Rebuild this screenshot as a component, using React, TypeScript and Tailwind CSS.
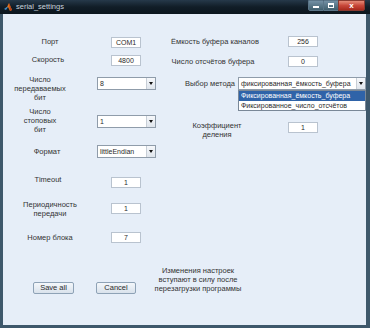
import React from 'react';

const font = { fontFamily: '"Liberation Sans", Arial, sans-serif' };

function Edit({ value, className = '' }: { value: string; className?: string }) {
  return (
    <div
      className={`w-[30px] h-[11px] shrink-0 bg-white border border-[#b9c3cf] flex items-center justify-center text-[7px] leading-none text-[#2a2a2a] ${className}`}
    >
      {value}
    </div>
  );
}

function Popup({ value, className = '' }: { value: string; className?: string }) {
  return (
    <div
      className={`h-[13px] shrink-0 bg-white border border-[#8f9caa] flex items-center text-[7px] leading-[11px] text-[#2a2a2a] ${className}`}
    >
      <span className="flex-1 pl-[2px] truncate">{value}</span>
      <span className="w-[9px] h-full flex items-center justify-center bg-gradient-to-b from-[#f6f8fb] to-[#dfe5ec] border-l border-[#c7ced6]">
        <span className="w-0 h-0 border-l-[2.5px] border-r-[2.5px] border-t-[3px] border-l-transparent border-r-transparent border-t-[#111]" />
      </span>
    </div>
  );
}

function Button({ label, className = '' }: { label: string; className?: string }) {
  return (
    <div
      className={`h-[12px] shrink-0 rounded-[2px] border border-[#8ea2b6] bg-gradient-to-b from-[#f4f7fb] to-[#d9e2ec] flex items-center justify-center text-[7.5px] leading-none text-[#2a2a2a] ${className}`}
    >
      {label}
    </div>
  );
}

export default function App() {
  return (
    <div
      className="w-[370px] h-[328px] flex flex-col bg-[#3e586b] text-[#333] text-[7.5px] select-none"
      style={font}
    >
      {/* title bar */}
      <div className="h-[14px] shrink-0 relative flex items-center bg-gradient-to-b from-[#26394a] via-[#111d27] to-[#0c161e]">
        <svg width="10" height="10" viewBox="0 0 10 10" className="ml-[3px]">
          <path d="M1 7 L4 5 L6 1 L9 8 L7 9 L5 5 Z" fill="#e2741f" />
          <path d="M1 7 L4 5 L5 5 L3 8 Z" fill="#3b8fd0" />
          <path d="M6 1 L9 8 L7 9 Z" fill="#b2401a" />
        </svg>
        <span className="ml-[3px] text-[7.5px] text-[#c9d3dc]">serial_settings</span>
        <div className="absolute right-[5px] top-0 flex h-[11px]">
          <div className="w-[16px] h-full rounded-bl-[2px] border border-[#5b7588] bg-gradient-to-b from-[#7390a4] to-[#41606f] flex items-end justify-center pb-[2px]">
            <span className="w-[6px] h-[2px] bg-white" />
          </div>
          <div className="w-[14px] h-full border-y border-[#5b7588] bg-gradient-to-b from-[#7390a4] to-[#41606f] flex items-center justify-center">
            <span className="w-[6px] h-[5px] border border-white border-t-2" />
          </div>
          <div className="w-[27px] h-full rounded-br-[2px] border border-[#8a3a30] bg-gradient-to-b from-[#e48a78] via-[#c8473a] to-[#a8281c] flex items-center justify-center text-white text-[8px] font-bold leading-none">
            x
          </div>
        </div>
      </div>

      {/* client */}
      <div className="flex-1 ml-[3px] mr-[4px] mb-[3px] bg-[#e6eef8] flex flex-col">
        <div className="flex">
          {/* left column */}
          <div className="w-[168px] shrink-0 flex flex-col">
            <div className="flex items-center h-[12px] mt-[22px]">
              <div className="w-[94px] shrink-0">
                <div className="ml-[17px] w-[60px] text-center">Порт</div>
              </div>
              <Edit value="COM1" className="ml-[14px]" />
            </div>
            <div className="flex items-center h-[12px] mt-[6px]">
              <div className="w-[94px] shrink-0">
                <div className="ml-[15px] w-[60px] text-center">Скорость</div>
              </div>
              <Edit value="4800" className="ml-[14px]" />
            </div>
            <div className="flex items-start h-[28px] mt-[9px]">
              <div className="w-[94px] shrink-0">
                <div className="ml-[7px] w-[60px] text-center leading-[9px]">
                  Число
                  <br />
                  передаваемых
                  <br />
                  бит
                </div>
              </div>
              <Popup value="8" className="w-[59px] mt-[2px]" />
            </div>
            <div className="flex items-start h-[28px] mt-[4px]">
              <div className="w-[94px] shrink-0">
                <div className="ml-[7px] w-[60px] text-center leading-[9px]">
                  Число
                  <br />
                  стоповых
                  <br />
                  бит
                </div>
              </div>
              <Popup value="1" className="w-[59px] mt-[8px]" />
            </div>
            <div className="flex items-center h-[13px] mt-[10px]">
              <div className="w-[94px] shrink-0">
                <div className="ml-[14px] w-[60px] text-center">Формат</div>
              </div>
              <Popup value="littleEndian" className="w-[59px]" />
            </div>
            <div className="flex items-start h-[13px] mt-[17px]">
              <div className="w-[94px] shrink-0">
                <div className="ml-[15px] w-[60px] text-center leading-[10px]">Timeout</div>
              </div>
              <Edit value="1" className="ml-[14px] mt-[2px]" />
            </div>
            <div className="flex items-start h-[19px] mt-[12px]">
              <div className="w-[94px] shrink-0">
                <div className="ml-[12px] w-[70px] text-center leading-[9px]">
                  Периодичность
                  <br />
                  передачи
                </div>
              </div>
              <Edit value="1" className="ml-[14px] mt-[3px]" />
            </div>
            <div className="flex items-center h-[11px] mt-[13px]">
              <div className="w-[94px] shrink-0">
                <div className="ml-[12px] w-[70px] text-center">Номер блока</div>
              </div>
              <Edit value="7" className="ml-[14px]" />
            </div>
          </div>

          {/* right column */}
          <div className="flex-1 flex flex-col">
            <div className="flex items-center h-[11px] mt-[22px]">
              <div className="w-[117px] shrink-0">
                <div className="w-[88px] text-center whitespace-nowrap">Ёмкость буфера каналов</div>
              </div>
              <Edit value="256" />
            </div>
            <div className="flex items-center h-[11px] mt-[9px]">
              <div className="w-[117px] shrink-0">
                <div className="w-[84px] text-center whitespace-nowrap">Число отсчётов буфера</div>
              </div>
              <Edit value="0" />
            </div>
            <div className="flex items-center h-[13px] mt-[10px]">
              <div className="w-[67px] shrink-0 text-right pr-[3px] whitespace-nowrap">Выбор метода</div>
              <div className="relative">
                <Popup value="фиксированная_ёмкость_буфера" className="w-[128px]" />
                <div className="absolute left-0 top-full w-[128px] bg-white border border-[#7a8898] text-[7px] z-10">
                  <div className="bg-[#2f63a8] text-white pl-[2px] h-[10px] leading-[10px]">
                    Фиксированная_ёмкость_буфера
                  </div>
                  <div className="pl-[2px] h-[9px] leading-[9px] text-[#2a2a2a]">
                    Фиксированное_число_отсчётов
                  </div>
                </div>
              </div>
            </div>
            <div className="flex items-start h-[18px] mt-[31px]">
              <div className="w-[117px] shrink-0">
                <div className="ml-[16px] w-[60px] text-center leading-[9px]">
                  Коэффициент
                  <br />
                  деления
                </div>
              </div>
              <Edit value="1" className="mt-[1px]" />
            </div>
          </div>
        </div>

        {/* bottom */}
        <div className="flex items-start mt-[23px]">
          <Button label="Save all" className="w-[41px] ml-[30px] mt-[16px]" />
          <Button label="Cancel" className="w-[40px] ml-[22px] mt-[16px]" />
          <div className="w-[100px] ml-[12px] text-center leading-[9px]">
            Изменения настроек
            <br />
            вступают в силу после
            <br />
            перезагрузки программы
          </div>
        </div>
      </div>
    </div>
  );
}
